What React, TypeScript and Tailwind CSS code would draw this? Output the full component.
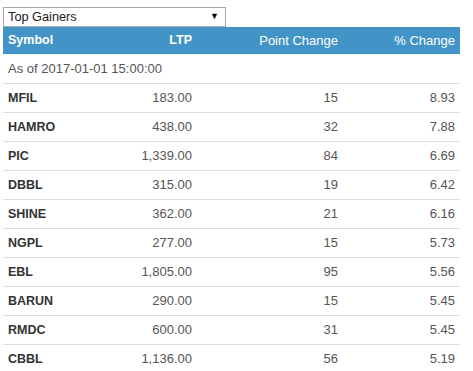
import React from "react";

const rows: [string, string, string, string][] = [
  ["MFIL", "183.00", "15", "8.93"],
  ["HAMRO", "438.00", "32", "7.88"],
  ["PIC", "1,339.00", "84", "6.69"],
  ["DBBL", "315.00", "19", "6.42"],
  ["SHINE", "362.00", "21", "6.16"],
  ["NGPL", "277.00", "15", "5.73"],
  ["EBL", "1,805.00", "95", "5.56"],
  ["BARUN", "290.00", "15", "5.45"],
  ["RMDC", "600.00", "31", "5.45"],
  ["CBBL", "1,136.00", "56", "5.19"],
];

export default function App() {
  return (
    <div
      className="w-[473px] h-[371px] overflow-hidden bg-white pt-[7px] pl-[3px]"
      style={{ fontFamily: '"Liberation Sans", Arial, sans-serif' }}
    >
      <div className="w-[223px] h-[20px] border border-[#a9a9a9] flex items-center justify-between pl-[4px] pr-[6px] text-[12.75px] text-[#222]">
        <span>Top Gainers</span>
        <span className="text-[9px] text-black">▼</span>
      </div>
      <div className="w-[457px] text-[13px]">
        <div className="grid grid-cols-[97px_98px_145px_117px] h-[27px] items-center bg-[#4294c6] text-white">
          <div className="pl-[5px] font-bold text-[12.5px]">Symbol</div>
          <div className="pr-[6px] text-right font-bold text-[12.5px]">LTP</div>
          <div className="pr-[5px] text-right">Point Change</div>
          <div className="pr-[5px] text-right">% Change</div>
        </div>
        <div className="h-[30px] flex items-center pl-[5px] text-[#555] border-b border-[#dddddd]">
          As of 2017-01-01 15:00:00
        </div>
        {rows.map((r) => (
          <div
            key={r[0]}
            className="grid grid-cols-[97px_98px_145px_117px] h-[29px] items-center border-b border-[#dddddd] text-[#555]"
          >
            <div className="pl-[5px] font-bold text-[#333] text-[12.5px]">{r[0]}</div>
            <div className="pr-[6px] text-right">{r[1]}</div>
            <div className="pr-[5px] text-right">{r[2]}</div>
            <div className="pr-[5px] text-right">{r[3]}</div>
          </div>
        ))}
      </div>
    </div>
  );
}
